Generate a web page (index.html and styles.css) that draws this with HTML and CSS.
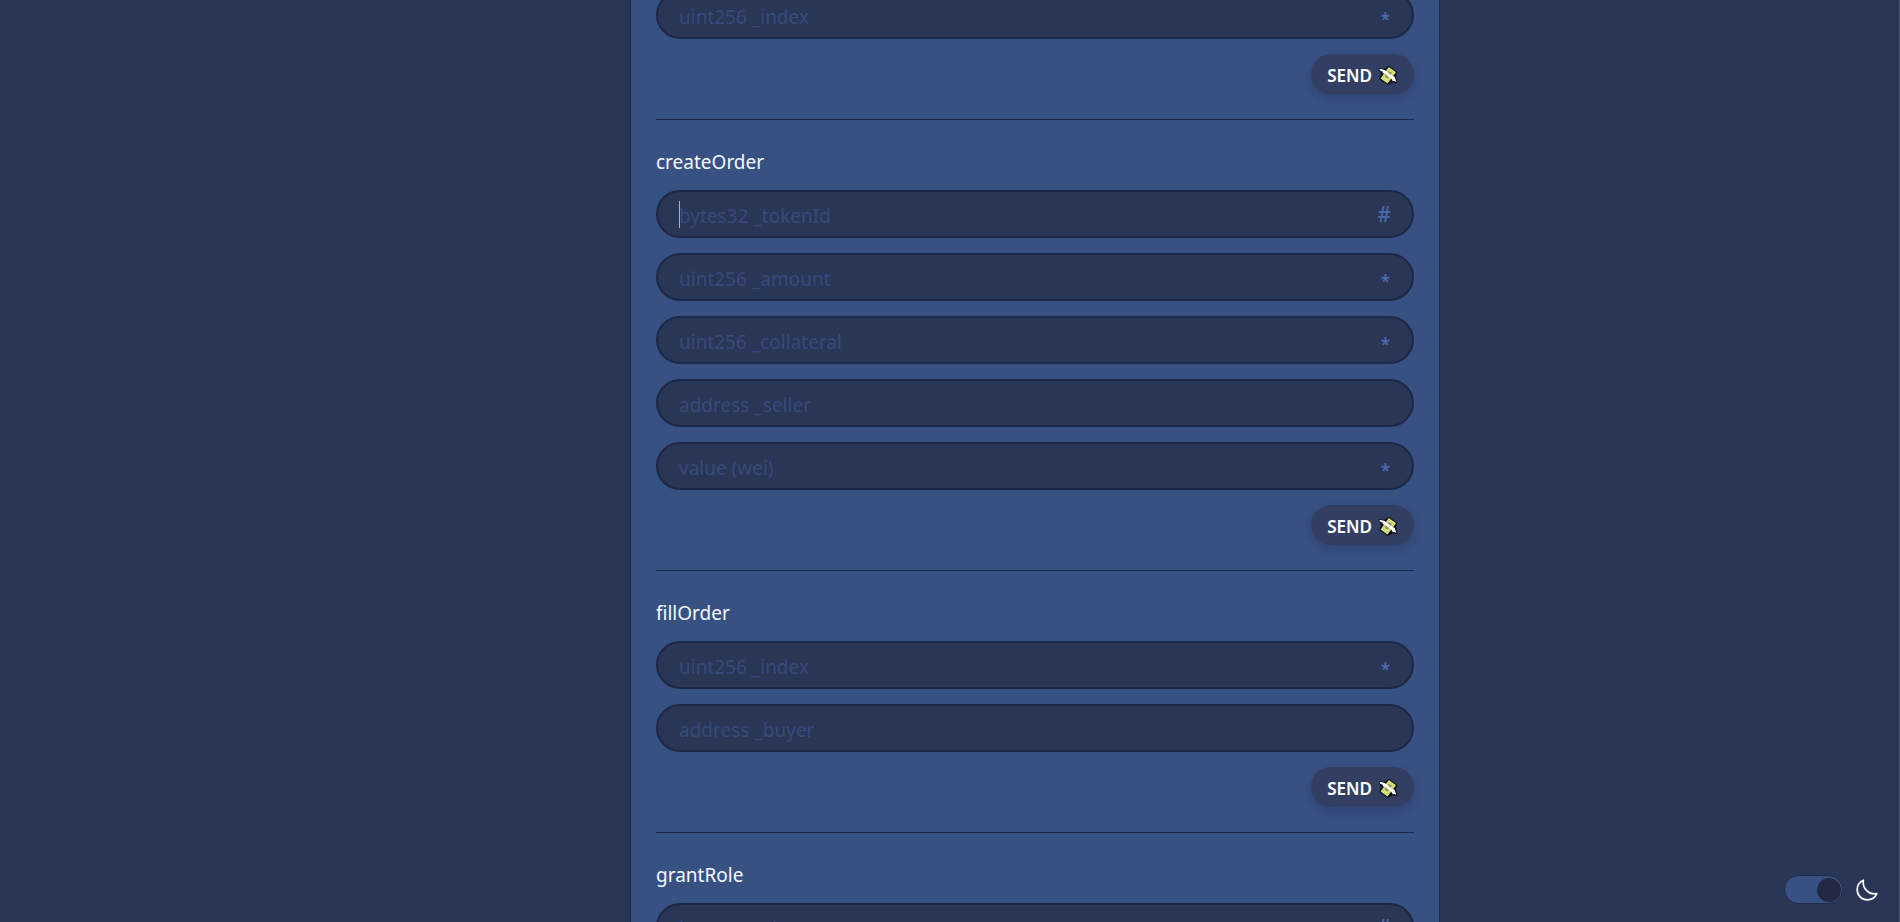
FILE: index.html
```html
<!DOCTYPE html>
<html lang="en">
<head>
<meta charset="utf-8">
<title>Contract</title>
<link rel="stylesheet" href="styles.css">
</head>
<body>
<svg class="sprite" aria-hidden="true">
  <symbol id="money" viewBox="0 0 20 20">
    <path d="M10.8 1.6 L18.6 7.2 L17.2 10.4 L18.6 17.2 L15 16.6 L9.6 19 L2 13.6 L4 9.4 L1.2 4 L6.4 4.6 Z" fill="#0b0d10" stroke="#0b0d10" stroke-width="1.4" stroke-linejoin="round"/>
    <path d="M10.8 2 L18 7.2 L9.5 18.6 L2.6 13.4 Z" fill="#e2ea86"/>
    <path d="M10.8 4.2 L16 8 L9.6 16.4 L4.8 12.8 Z" fill="none" stroke="#b9c266" stroke-width=".8"/>
    <path d="M10.2 6 L13.8 7.6 L12.8 10.8 L9.4 13.8 L6.8 12 L7.8 9 Z" fill="#8f9358"/>
    <path d="M1.2 4 C4.4 3.8 8 5 10.6 8 L13.6 10.4 L16.6 11.8 L18.4 17 L15.8 15.8 L15 16.4 L13 13.2 L9.8 11.2 L7.4 8.8 L5 8.2 L4.6 6.4 L2.6 6 Z" fill="#fff"/>
  </symbol>
</svg>
<main class="page">
  <div class="card">
    <form class="method">
      <label class="field"><input type="text" placeholder="uint256 _index" aria-label="uint256 _index"><button type="button" class="helper star">*</button></label>
      <button type="button" class="send">SEND <svg class="money"><use href="#money"/></svg></button>
    </form>
    <form class="method">
      <h2 class="name">createOrder</h2>
      <label class="field"><input type="text" placeholder="bytes32 _tokenId" aria-label="bytes32 _tokenId"><span class="caret"></span><button type="button" class="helper">#</button></label>
      <label class="field"><input type="text" placeholder="uint256 _amount" aria-label="uint256 _amount"><button type="button" class="helper star">*</button></label>
      <label class="field"><input type="text" placeholder="uint256 _collateral" aria-label="uint256 _collateral"><button type="button" class="helper star">*</button></label>
      <label class="field"><input type="text" placeholder="address _seller" aria-label="address _seller"></label>
      <label class="field"><input type="text" placeholder="value (wei)" aria-label="value (wei)"><button type="button" class="helper star">*</button></label>
      <button type="button" class="send">SEND <svg class="money"><use href="#money"/></svg></button>
    </form>
    <form class="method">
      <h2 class="name">fillOrder</h2>
      <label class="field"><input type="text" placeholder="uint256 _index" aria-label="uint256 _index"><button type="button" class="helper star">*</button></label>
      <label class="field"><input type="text" placeholder="address _buyer" aria-label="address _buyer"></label>
      <button type="button" class="send">SEND <svg class="money"><use href="#money"/></svg></button>
    </form>
    <form class="method">
      <h2 class="name">grantRole</h2>
      <label class="field"><input type="text" placeholder="bytes32 role" aria-label="bytes32 role"><button type="button" class="helper">#</button></label>
    </form>
  </div>
</main>
<div class="theme">
  <input type="checkbox" id="dark" class="switch" checked>
  <label for="dark" aria-label="Dark theme"><svg class="moon" viewBox="0 0 22 22"><path d="M7.4 1.2 C3.6 2.8 1.2 6.6 1.2 10.8 C1.2 16.3 5.6 20.8 11.2 20.8 C15.6 20.8 19.2 18.4 20.8 14.6 C13 16.4 6 9.4 7.4 1.2 Z"/></svg></label>
</div>
</body>
</html>
```
FILE: styles.css
```css
* { box-sizing: border-box; }
body {
  margin: 0;
  height: 100vh;
  overflow: hidden;
  background: #2a3655;
  color: #f4f8ff;
  font-family: "Segoe UI", "Noto Sans", "Open Sans", sans-serif;
  font-size: 19px;
}
.sprite { display: none; }
.page {
  display: grid;
  grid-template-columns: 630fr 810fr 459fr;
  height: 100vh;
  overflow: hidden;
  border-right: 1px solid #4a5470;
}
.card {
  grid-column: 2;
  padding: 0 25px;
  background: #385183;
  border: solid #1f2a48;
  border-width: 0 1px;
}
.method {
  display: flex;
  flex-direction: column;
  gap: 15px;
  padding-bottom: 25px;
  border-bottom: 1px solid #192545;
}
.method:first-child { margin-top: -9px; }
.name {
  margin: 0;
  padding-top: 30px;
  font-size: 19px;
  font-weight: 400;
  line-height: 25px;
}
.field {
  position: relative;
  display: flex;
  height: 48px;
  padding: 3px 21px 0;
  background: #2a3655;
  border: 2px solid #1d2747;
  border-radius: 24px;
}
.field input {
  flex: 1;
  min-width: 0;
  padding: 0;
  border: 0;
  outline: 0;
  background: none;
  color: #f4f8ff;
  font: inherit;
}
.field input::placeholder { color: #364a7c; opacity: 1; }
.helper {
  padding: 0 0 3px;
  border: 0;
  background: none;
  color: #4e68ac;
  font: inherit;
  font-size: 21px;
  font-weight: 500;
}
.star {
  padding: 5px 1px 0 0;
  font-size: 17px;
  font-weight: 600;
}
.caret {
  position: absolute;
  left: 21px;
  top: 9px;
  width: 1px;
  height: 27px;
  background: #a4b2d4;
}
.send {
  display: flex;
  align-self: flex-end;
  align-items: center;
  gap: 6px;
  height: 40px;
  padding: 2px 16px 0;
  border: 0;
  border-radius: 20px;
  background: #333f62;
  box-shadow: 0 4px 8px rgba(30, 40, 70, 0.3);
  color: #fff;
  font: 600 17px "Segoe UI", "Noto Sans", "Open Sans", sans-serif;
}
.money { width: 20px; height: 20px; }
.theme {
  position: fixed;
  right: 22px;
  bottom: 18px;
  display: flex;
  align-items: center;
  gap: 13px;
}
.theme label { display: flex; }
.switch {
  appearance: none;
  display: flex;
  align-items: center;
  justify-content: flex-end;
  width: 59px;
  height: 29px;
  margin: 0;
  padding: 0 1px;
  border: 1px solid #202b49;
  border-radius: 15px;
  background: #385183;
}
.switch::before {
  content: "";
  width: 24px;
  height: 24px;
  border-radius: 50%;
  background: #222940;
}
.moon {
  width: 22px;
  height: 22px;
  fill: none;
  stroke: #f4f8ff;
  stroke-width: 1.7;
  stroke-linejoin: round;
}
```
